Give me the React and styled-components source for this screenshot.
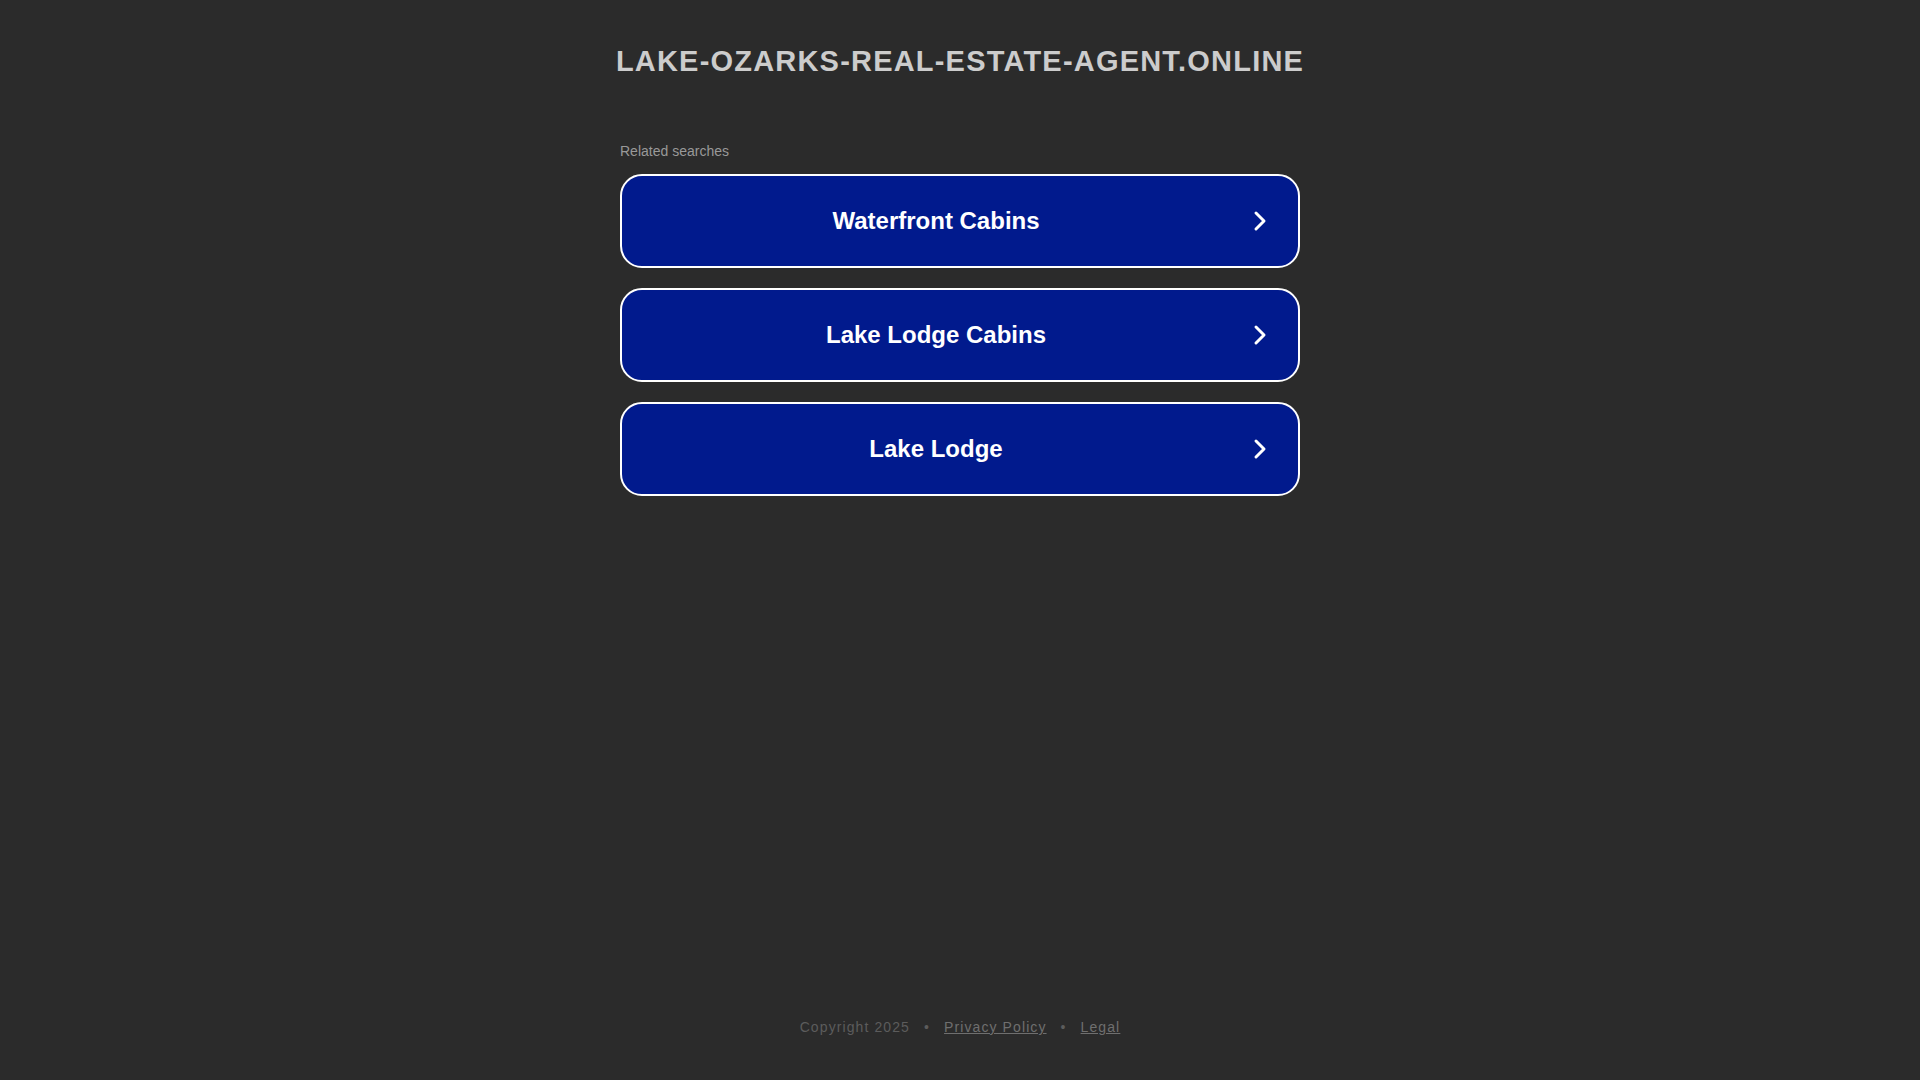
import React from "react";
import styled, { createGlobalStyle } from "styled-components";

const GlobalStyle = createGlobalStyle`
  html, body {
    margin: 0;
    padding: 0;
    background: #2b2b2b;
    font-family: "Liberation Sans", Arial, sans-serif;
  }
`;

const Page = styled.div`
  min-height: 100vh;
  display: flex;
  flex-direction: column;
  align-items: center;
  box-sizing: border-box;
`;

const Domain = styled.h1`
  margin: 44px 0 0;
  font-size: 29px;
  line-height: 34px;
  font-weight: bold;
  letter-spacing: 1.2px;
  color: #cccccc;
  text-align: center;
`;

const Content = styled.main`
  width: 680px;
  margin-top: 65px;
  display: flex;
  flex-direction: column;
`;

const Label = styled.div`
  font-size: 14px;
  line-height: 16px;
  color: #999999;
  margin-bottom: 15px;
`;

const List = styled.div`
  display: flex;
  flex-direction: column;
  gap: 20px;
`;

const SearchLink = styled.a`
  display: flex;
  align-items: center;
  height: 94px;
  box-sizing: border-box;
  border: 2px solid #ffffff;
  border-radius: 22px;
  background: #011a8d;
  color: #ffffff;
  text-decoration: none;
  padding-right: 28px;
  cursor: pointer;
`;

const LinkText = styled.span`
  flex: 1;
  text-align: center;
  font-size: 24px;
  font-weight: bold;
`;

const Footer = styled.footer`
  margin-top: auto;
  padding-bottom: 45px;
  font-size: 14px;
  line-height: 16px;
  letter-spacing: 1.1px;
  color: #5c5c5c;
  display: flex;
  align-items: center;
`;

const Sep = styled.span`
  margin: 0 14px;
`;

const FooterLink = styled.a`
  color: #6f6f6f;
  text-decoration: underline;
`;

const Chevron = () => (
  <svg width="20" height="22" viewBox="0 0 20 22" fill="none">
    <polyline
      points="6,3 14,11 6,19"
      stroke="#ffffff"
      strokeWidth="3"
      strokeLinecap="round"
      strokeLinejoin="round"
    />
  </svg>
);

const searches = ["Waterfront Cabins", "Lake Lodge Cabins", "Lake Lodge"];

export default function App() {
  return (
    <>
      <GlobalStyle />
      <Page>
        <Domain>LAKE-OZARKS-REAL-ESTATE-AGENT.ONLINE</Domain>
        <Content>
          <Label>Related searches</Label>
          <List>
            {searches.map((s) => (
              <SearchLink key={s}>
                <LinkText>{s}</LinkText>
                <Chevron />
              </SearchLink>
            ))}
          </List>
        </Content>
        <Footer>
          <span>Copyright 2025</span>
          <Sep>•</Sep>
          <FooterLink>Privacy Policy</FooterLink>
          <Sep>•</Sep>
          <FooterLink>Legal</FooterLink>
        </Footer>
      </Page>
    </>
  );
}
